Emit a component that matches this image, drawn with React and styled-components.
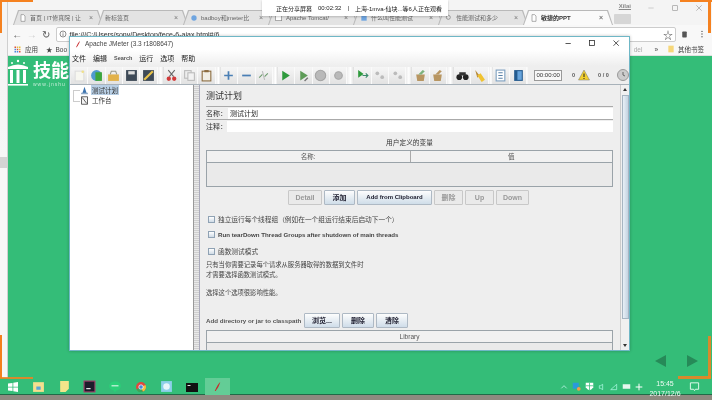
import React from "react";
import styled, { createGlobalStyle, css } from "styled-components";

const Global = createGlobalStyle`
  html, body { margin: 0; padding: 0; background: #fff; }
  * { box-sizing: border-box; }
  #root { width: 712px; height: 400px; overflow: hidden; }
`;

const FONT = `"Liberation Sans", "Noto Sans CJK SC", sans-serif`;
const ORANGE = "#f5811f";
const GREEN = "#34bd78";

const Screen = styled.div`
  position: relative;
  width: 712px;
  height: 400px;
  overflow: hidden;
  display: flex;
  flex-direction: column;
  background: #f4f4f4;
  font-family: ${FONT};
  color: #222;
  filter: blur(0.4px);
`;
const Upper = styled.div`
  flex: 1;
  min-height: 0;
  display: flex;
`;
const LeftEdge = styled.div`
  width: 8px;
  background: linear-gradient(#f4f4f4 52px, #f7f7f7 157px, #d4d4d4 157px, #d4d4d4 168px, #f7f7f7 168px);
  border-right: 1px solid #cfcfcf;
`;
const Browser = styled.div`
  flex: 1;
  min-width: 0;
  display: flex;
  flex-direction: column;
`;
const TabStrip = styled.div`
  height: 25px;
  display: flex;
  align-items: flex-end;
  padding: 0 0 0 5px;
  background: #f4f4f4;
`;
const Tab = styled.div`
  position: relative;
  isolation: isolate;
  flex-shrink: 0;
  width: 90px;
  margin-left: ${(p) => (p.$first ? 0 : -5)}px;
  height: 15px;
  display: flex;
  align-items: center;
  gap: 3px;
  padding: 0 10px 0 ${(p) => (p.$first ? 6 : 7)}px;
  font-size: 6px;
  white-space: nowrap;
  color: #666;
  background: #b9b9b9;
  clip-path: polygon(5px 0, calc(100% - 5px) 0, 100% 100%, 0 100%);
  z-index: ${(p) => (p.$active ? 2 : 1)};
  &::before {
    content: "";
    position: absolute;
    inset: 1px 1px 0 1px;
    z-index: -1;
    background: ${(p) => (p.$active ? "#fafafa" : "#e3e3e3")};
    clip-path: polygon(5px 0, calc(100% - 5px) 0, 100% 100%, 0 100%);
  }
  ${(p) => p.$active && css`color: #333; font-weight: 700;`}
`;
const TabTitle = styled.span`
  flex: 1;
`;
const TabClose = styled.span`
  font-size: 7px;
  color: #777;
`;
const NewTab = styled.div`
  flex-shrink: 0;
  width: 17px;
  height: 10px;
  margin: 0 0 1px 1px;
  background: #d6d6d6;
  border-radius: 1px;
`;
const WinControls = styled.div`
  flex: 1;
  margin-left: -16px;
  align-self: flex-start;
  display: flex;
  align-items: center;
  justify-content: flex-end;
  gap: 16px;
  height: 15px;
  padding-right: 9px;
  color: #999;
`;
const UserName = styled.span`
  font-size: 6px;
  font-weight: 700;
  color: #888;
  text-decoration: underline;
  margin-bottom: 3px;
`;
const AddressRow = styled.div`
  height: 18px;
  display: flex;
  align-items: center;
  background: #f8f8f8;
  padding: 0 2px;
  color: #555;
  font-size: 10px;
`;
const NavBtn = styled.span`
  width: 14.5px;
  text-align: center;
  color: ${(p) => (p.$off ? "#ccc" : "#555")};
`;
const Omni = styled.div`
  flex: 1;
  height: 15px;
  margin-left: 2px;
  background: #fff;
  border: 1px solid #ccc;
  border-radius: 2px;
  padding: 0 2px;
  display: flex;
  align-items: center;
  gap: 3px;
  font-size: 7px;
  color: #333;
`;
const OmniUrl = styled.span`
  flex: 1;
`;
const OmniStar = styled.span`
  font-size: 10px;
  color: #555;
`;
const ChromeBtn = styled.span`
  width: 17px;
  display: flex;
  justify-content: center;
`;
const BookmarkRow = styled.div`
  height: 13px;
  display: flex;
  align-items: center;
  background: #f8f8f8;
  padding: 0 8px 0 5px;
  font-size: 6.5px;
  color: #444;
  border-bottom: 1px solid #e0e0e0;
`;
const BmSpacer = styled.div`
  flex: 1;
`;
const BmItem = styled.span`
  margin-left: ${(p) => p.$ml || 4}px;
  color: ${(p) => p.$color || "#444"};
`;
const Page = styled.div`
  flex: 1;
  background: ${GREEN};
  padding-top: 3px;
`;
const Logo = styled.div`
  display: flex;
  align-items: flex-start;
  gap: 5px;
  color: #fff;
`;
const LogoText = styled.div`
  margin-top: 1px;
`;
const LogoName = styled.div`
  font-size: 18px;
  font-weight: 700;
  line-height: 19px;
  font-family: "Noto Sans CJK SC", sans-serif;
`;
const LogoUrl = styled.div`
  font-size: 5px;
  line-height: 6px;
  margin-top: 2px;
  letter-spacing: 1px;
  opacity: 0.7;
`;
const Taskbar = styled.div`
  position: relative;
  height: 22px;
  background: linear-gradient(${GREEN} 16px, #1f6b47 16px, #1f6b47 17px, #8e8a80 17px);
  display: flex;
  align-items: flex-start;
`;
const TaskIcons = styled.div`
  display: flex;
`;
const TaskItem = styled.div`
  width: ${(p) => p.$w || 25.5}px;
  height: 17px;
  display: flex;
  align-items: center;
  justify-content: center;
  background: ${(p) => (p.$active ? "#63cd96" : "transparent")};
`;
const Tray = styled.div`
  margin-left: auto;
  display: flex;
  align-items: center;
  height: 17px;
  gap: 4px;
  color: #e6f7ee;
  font-size: 7px;
  padding-right: 12px;
`;
const Clock = styled.div`
  width: 38px;
  text-align: center;
  font-size: 7px;
  line-height: 10px;
  margin: 4px 1px 0 -1px;
  color: #f0fbf5;
`;

const ShareBar = styled.div`
  position: absolute;
  left: 262px;
  top: 0;
  width: 186px;
  height: 16px;
  background: #fff;
  display: flex;
  align-items: center;
  gap: 6px;
  padding-left: 14px;
  font-size: 6px;
  color: #222;
  white-space: nowrap;
  box-shadow: 0 1px 2px rgba(0,0,0,.2);
  z-index: 3;
`;
const Corner = styled.div`
  position: absolute;
  background: ${ORANGE};
  ${(p) => p.$b}
`;
const Arrow = styled.div`
  position: absolute;
  top: 355px;
  left: ${(p) => p.$x}px;
  width: 0;
  height: 0;
  border-top: 6px solid transparent;
  border-bottom: 6px solid transparent;
  ${(p) => (p.$dir === "l" ? "border-right: 11px solid #268a58;" : "border-left: 11px solid #268a58;")}
`;

/* JMeter window */
const Win = styled.div`
  position: absolute;
  left: 69px;
  top: 36px;
  width: 561px;
  height: 315px;
  display: flex;
  flex-direction: column;
  background: #eee;
  border: 1px solid #6fb7c6;
  box-shadow: 0 0 3px rgba(0,0,0,.25);
  overflow: hidden;
  z-index: 2;
`;
const WinTitle = styled.div`
  height: 13px;
  background: #fff;
  display: flex;
  align-items: center;
  padding: 0 8px 0 4px;
  font-size: 6.5px;
  color: #444;
  gap: 3px;
`;
const WinTitleText = styled.span`
  flex: 1;
`;
const WinBtns = styled.div`
  display: flex;
  gap: 15px;
  align-items: center;
  color: #222;
`;
const MenuBar = styled.div`
  height: 16px;
  display: flex;
  align-items: center;
  padding-left: 2px;
  gap: 7px;
  font-size: 7px;
  color: #222;
  background: linear-gradient(#fff, #eee);
`;
const MenuSmall = styled.span`
  font-size: 5.5px;
  font-weight: 700;
  color: #555;
`;
const Toolbar = styled.div`
  height: 19px;
  display: flex;
  align-items: center;
  background: #eeeeee;
  border-bottom: 1px solid #a8b2ba;
  padding-left: 1px;
  font-size: 6px;
  color: #333;
`;
const TBtn = styled.div`
  width: 17.5px;
  height: 17px;
  display: flex;
  align-items: center;
  justify-content: center;
  background: linear-gradient(#f6f6f6, #e2e2e2);
  border-right: 1px solid #fafafa;
  & svg { width: 13px; height: 13px; }
`;
const TSep = styled.div`
  width: ${(p) => p.$w || 5}px;
  height: 17px;
  background: linear-gradient(90deg, #eee, #fff, #ddd);
`;
const Timer = styled.div`
  width: 28px;
  height: 11px;
  margin-left: 5px;
  border: 1px solid #999;
  background: #f8f8f8;
  font-size: 6px;
  line-height: 9px;
  text-align: center;
`;
const TText = styled.span`
  margin-left: ${(p) => p.$ml}px;
  font-size: 5.5px;
  font-weight: 700;
  color: #555;
  white-space: nowrap;
`;
const ToolGlyph = styled.span`
  margin-left: ${(p) => p.$ml}px;
`;
const Body = styled.div`
  flex: 1;
  min-height: 0;
  display: flex;
`;
const TreePane = styled.div`
  position: relative;
  width: 124px;
  background: #fff;
  padding-left: 5px;
  border-right: 1px solid #999;
  font-size: 6.5px;
  &::before {
    content: "";
    position: absolute;
    left: 3px;
    top: 5px;
    width: 6px;
    height: 10px;
    border: 1px solid #ccc;
    border-right: 0;
  }
`;
const TreeRow = styled.div`
  height: 10px;
  display: flex;
  align-items: center;
  gap: 2px;
  padding-left: 5px;
`;
const TreeLabel = styled.span`
  padding: 0 1px;
  color: #333;
  background: ${(p) => (p.$sel ? "#b8cfe5" : "transparent")};
`;
const Splitter = styled.div`
  width: 6px;
  background: repeating-linear-gradient(#e9e9e9 0 1px, #cfcfcf 1px 2px);
  border-right: 1px solid #aab;
`;
const RightPane = styled.div`
  flex: 1;
  min-width: 0;
  display: flex;
`;
const Form = styled.div`
  flex: 1;
  min-width: 0;
  padding: 6px 7px 0 6px;
  display: flex;
  flex-direction: column;
  font-size: 7px;
  overflow: hidden;
  & > * { flex-shrink: 0; }
`;
const Heading = styled.div`
  font-size: 9px;
  line-height: 11px;
  color: #333;
  height: 15px;
`;
const FieldRow = styled.div`
  display: flex;
  align-items: center;
  height: 13px;
  border-top: 1px solid #aaa;
`;
const FieldLabel = styled.div`
  width: ${(p) => p.$w}px;
  font-size: 7px;
  color: #333;
`;
const FieldInput = styled.div`
  flex: 1;
  height: 11px;
  background: #fff;
  font-size: 7px;
  line-height: 11px;
  padding-left: 2px;
`;
const GroupTitle = styled.div`
  text-align: center;
  font-size: 6.7px;
  line-height: 10px;
  margin: 6px 0 2px 0;
  color: #333;
`;
const Table = styled.div`
  border: 1px solid #9aa3a9;
  height: ${(p) => p.$h}px;
  margin-top: ${(p) => p.$mt || 0}px;
  background: #eaeaea;
`;
const TableHead = styled.div`
  display: grid;
  grid-template-columns: ${(p) => p.$cols};
  height: 12px;
  background: #f1f1f1;
  border-bottom: 1px solid #9aa3a9;
`;
const HeadCell = styled.div`
  text-align: center;
  font-size: 6.5px;
  line-height: 11px;
  color: #555;
  & + & { border-left: 1px solid #aaa; }
`;
const ButtonRow = styled.div`
  display: flex;
  align-items: center;
  gap: 2px;
  ${(p) => p.$pad && `padding: ${p.$pad};`}
`;
const Btn = styled.div`
  width: ${(p) => p.$w}px;
  height: 15px;
  border: 1px solid ${(p) => (p.$off ? "#c8c8c8" : "#aeb9c4")};
  background: ${(p) => (p.$off ? "#eaeaea" : "linear-gradient(#fdfdfd, #cfdde9)")};
  color: ${(p) => (p.$off ? "#999" : "#223")};
  font-size: ${(p) => p.$fs || 6}px;
  font-weight: ${(p) => (p.$off ? 700 : 700)};
  line-height: 13px;
  text-align: center;
  white-space: nowrap;
  border-radius: 1px;
`;
const CheckRow = styled.div`
  display: flex;
  align-items: center;
  gap: 3px;
  height: 10px;
  margin-top: ${(p) => p.$mt}px;
  padding-left: 2px;
  font-size: ${(p) => p.$fs || 6.7}px;
  font-weight: ${(p) => p.$weight || 400};
  color: #444;
  white-space: nowrap;
`;
const CheckBox = styled.span`
  width: 7px;
  height: 7px;
  border: 1px solid #8fa2b4;
  background: linear-gradient(#fff, #cfdbe6);
`;
const Note = styled.div`
  font-size: 6.3px;
  line-height: 10px;
  color: #444;
  margin-top: ${(p) => p.$mt}px;
`;
const ClassLabel = styled.span`
  width: 96px;
  font-size: 6.2px;
  font-weight: 700;
  color: #555;
  white-space: nowrap;
`;
const VScroll = styled.div`
  width: 9px;
  background: #f0f0f0;
  border-left: 1px solid #ccc;
  display: flex;
  flex-direction: column;
  align-items: center;
  padding-top: 3px;
`;
const ScrollThumb = styled.div`
  width: 7px;
  height: 224px;
  margin-top: 4px;
  background: linear-gradient(90deg, #e9f0f6, #c3d3e1);
  border: 1px solid #a6b5c2;
`;
const ScrollEnd = styled.div`
  margin-top: auto;
  margin-bottom: 3px;
  width: 0;
  height: 0;
  border-left: 2px solid transparent;
  border-right: 2px solid transparent;
  border-top: 3px solid #333;
`;
const ScrollTop = styled.div`
  width: 0;
  height: 0;
  border-left: 2px solid transparent;
  border-right: 2px solid transparent;
  border-bottom: 3px solid #333;
`;

const I = ({ s = 12, children, vb = "0 0 12 12" }) => (
  <svg width={s} height={s} viewBox={vb} style={{ flexShrink: 0, display: "block" }}>{children}</svg>
);

const Doc = () => (
  <I s={8}><path d="M3 1h4l2 2v8H3z" fill="#fff" stroke="#888" /></I>
);
const Feather = ({ s = 8 }) => (
  <I s={s}><path d="M9 1 C7 3 5 6 3 11 L4 11 C6 8 8 5 9 1z" fill="#c8292b" /></I>
);
const Temple = () => (
  <svg width="20" height="28" viewBox="0 0 20 28" style={{ display: "block" }}>
    <g fill="#fff">
      <circle cx="10" cy="2" r="1.2" /><circle cx="4" cy="4" r="1" /><circle cx="16" cy="4" r="1" />
      <path d="M0 8 Q10 3 20 8 V10 H0z" />
      <rect x="2" y="11" width="3" height="13" /><rect x="8.5" y="11" width="3" height="13" /><rect x="15" y="11" width="3" height="13" />
      <rect x="0" y="25" width="20" height="1.6" />
    </g>
  </svg>
);

const Plus = ({ minus }) => (
  <I><path d={minus ? "M2 6h8" : "M2 6h8M6 2v8"} stroke="#4a7fb5" strokeWidth="1.6" /></I>
);
const Play = ({ pen }) => (
  <I><path d="M3 1.5 10 6 3 10.5z" fill={pen ? "#5e9c58" : "#2e9a3c"} />{pen && <path d="M7 11l3-3" stroke="#777" strokeWidth="1.3" />}</I>
);
const Stop = ({ small }) => (
  <I><circle cx="6" cy="6" r={small ? 3.5 : 4.8} fill="#b9b9b9" stroke="#a4a4a4" /></I>
);
const Dots = () => (
  <I><circle cx="4" cy="4" r="1.7" fill="#bbb" /><circle cx="8.5" cy="7.5" r="1.7" fill="#bbb" /></I>
);
const Basket = ({ tint }) => (
  <I><path d="M2 5h8l-1 6H3z" fill="#b89662" /><path d="M4 5 8 1l2 1-3 3z" fill={tint} /></I>
);

export default function App() {
  return (
    <Screen>
      <Global />
      <Upper>
        <LeftEdge />
        <Browser>
          <TabStrip>
            <Tab $first><Doc /><TabTitle>首页 | IT修真院 | 让</TabTitle><TabClose>×</TabClose></Tab>
            <Tab><TabTitle>新标签页</TabTitle><TabClose>×</TabClose></Tab>
            <Tab><I s={8}><circle cx="6" cy="6" r="4" fill="#6fa5e0" /></I><TabTitle>badboy和jmeter比</TabTitle><TabClose>×</TabClose></Tab>
            <Tab><I s={8}><rect x="1" y="2" width="9" height="8" fill="#fff" stroke="#888" /></I><TabTitle>Apache Tomcat/</TabTitle><TabClose>×</TabClose></Tab>
            <Tab><I s={8}><rect x="2" y="2" width="8" height="8" fill="#6fa5e0" /></I><TabTitle>什么叫性能测试</TabTitle><TabClose>×</TabClose></Tab>
            <Tab><I s={8}><circle cx="5" cy="5" r="3" fill="none" stroke="#777" /></I><TabTitle>性能测试和多少</TabTitle><TabClose>×</TabClose></Tab>
            <Tab $active><Doc /><TabTitle>敏捷的PPT</TabTitle><TabClose>×</TabClose></Tab>
            <NewTab />
            <WinControls>
              <UserName>Xilai</UserName>
              <I s={8}><path d="M2 6h8" stroke="#bbb" /></I>
              <I s={8}><rect x="2.5" y="2.5" width="7" height="7" fill="none" stroke="#999" /></I>
              <I s={8}><path d="M2 2l8 8M10 2l-8 8" stroke="#999" /></I>
            </WinControls>
          </TabStrip>
          <AddressRow>
            <NavBtn>←</NavBtn>
            <NavBtn $off>→</NavBtn>
            <NavBtn>↻</NavBtn>
            <Omni>
              <I s={8}><circle cx="6" cy="6" r="4.5" fill="none" stroke="#555" /><path d="M6 5v4M6 3v1" stroke="#555" /></I>
              <OmniUrl>file:///C:/Users/sony/Desktop/fece-6-ajax.html#/6</OmniUrl>
              <OmniStar>☆</OmniStar>
            </Omni>
            <ChromeBtn><I s={9}><rect x="3" y="2" width="6" height="8" rx="1" fill="#555" /></I></ChromeBtn>
            <ChromeBtn><I s={8}><path d="M6 2v.1M6 6v.1M6 10v.1" stroke="#555" strokeWidth="2" strokeLinecap="round" /></I></ChromeBtn>
          </AddressRow>
          <BookmarkRow>
            <I s={9}>
              {[2, 5, 8].map((y) => [2, 5, 8].map((x) => (
                <rect key={`${x}-${y}`} x={x} y={y} width="2" height="2" fill={x === y ? "#d9503f" : x > y ? "#e6b93c" : "#4a87d9"} />
              )))}
            </I>
            <BmItem $ml={3}>应用</BmItem>
            <BmItem $ml={8}>★</BmItem>
            <BmItem $ml={3}>Boo</BmItem>
            <BmSpacer />
            <BmItem $color="#aaa">del</BmItem>
            <BmItem $ml={12}>»</BmItem>
            <BmItem $ml={9}><I s={8}><rect x="2" y="1" width="8" height="10" fill="#f6d77a" /></I></BmItem>
            <BmItem $ml={3}>其他书签</BmItem>
          </BookmarkRow>
          <Page>
            <Logo>
              <Temple />
              <LogoText>
                <LogoName>技能</LogoName>
                <LogoUrl>www.jnshu</LogoUrl>
              </LogoText>
            </Logo>
          </Page>
        </Browser>
      </Upper>
      <Taskbar>
        <TaskIcons>
          <TaskItem $w={26}>
            <I s={12}><path d="M1 2.5 5.5 2v3.7H1zM6.3 1.8 11 1v4.7H6.3zM1 6.5h4.5V10L1 9.5zM6.3 6.5H11V11l-4.7-.7z" fill="#fff" /></I>
          </TaskItem>
          <TaskItem><I s={13}><path d="M1 2h10v9H1z" fill="#f5df8e" /><rect x="4" y="6" width="4" height="3" fill="#5aa5d6" /></I></TaskItem>
          <TaskItem><I s={13}><path d="M2 1h8v7l-3 3H2z" fill="#f3e58a" /></I></TaskItem>
          <TaskItem><I s={13}><rect x="1" y="1" width="10" height="10" fill="#1c1c2a" stroke="#a33a6a" /><path d="M3 8h4" stroke="#fff" /></I></TaskItem>
          <TaskItem><I s={14}><path d="M1 5a5 4 0 1 1 6 4l-1 2-1-2a5 4 0 0 1-4-4z" fill="#2bcf78" /><path d="M3 5h6" stroke="#fff" strokeWidth=".8" /></I></TaskItem>
          <TaskItem>
            <I s={12}><circle cx="6" cy="6" r="5" fill="#e0483e" /><path d="M6 6 1.5 8.5A5 5 0 0 0 8 10.6z" fill="#3ba55a" /><path d="M6 6l4.5-2a5 5 0 0 1-2.5 6.6z" fill="#f5c33b" /><circle cx="6" cy="6" r="2.2" fill="#4a87d9" stroke="#fff" strokeWidth=".7" /></I>
          </TaskItem>
          <TaskItem><I s={13}><rect x="1" y="1" width="10" height="10" fill="#8ed0ea" /><circle cx="6" cy="6" r="3" fill="#e8f6fb" /></I></TaskItem>
          <TaskItem><I s={12}><rect x="0" y="2" width="12" height="9" fill="#111" /><path d="M1.5 4.5h3" stroke="#ddd" /></I></TaskItem>
          <TaskItem $active><Feather s={11} /></TaskItem>
        </TaskIcons>
        <Tray>
          <I s={8}><path d="M2 8l4-4 4 4" fill="none" stroke="#dff" /></I>
          <I s={9}><rect x="1" y="1" width="8" height="8" fill="#2a9ad9" /><circle cx="9" cy="9" r="2.5" fill="#f19a4a" /></I>
          <I s={9}><path d="M1 1h10v6q-2 3-5 4-3-1-5-4z" fill="#fff" /><path d="M6 1v10M1 5h10" stroke="#34bd78" /></I>
          <I s={8}><path d="M2 4h2l3-2v8L4 8H2z" fill="none" stroke="#bfe" /></I>
          <I s={8}><path d="M1 10 10 2v8z" fill="none" stroke="#bfe" /></I>
          <I s={9}><rect x="1" y="3" width="10" height="6" fill="#e6f7ee" /></I>
          <I s={8}><path d="M6 1v10M1 6h10" stroke="#fff" strokeWidth="1.5" /></I>
          <Clock>15:45<br />2017/12/6</Clock>
          <I s={11}><path d="M1.5 2h9v7H7L6 10.5 5 9H1.5z" fill="none" stroke="#eafff3" /></I>
        </Tray>
      </Taskbar>

      <ShareBar>
        <span>正在分享屏幕</span>
        <span>00:02:32</span>
        <span>|</span>
        <span>上海-1mva-仙块...等6人正在观看</span>
      </ShareBar>

      <Corner $b="left:0;top:0;width:33px;height:2px;" />
      <Corner $b="left:0;top:0;width:2px;height:33px;" />
      <Corner $b="left:0;top:335px;width:2px;height:43px;" />
      <Corner $b="left:0;top:377px;width:33px;height:2px;opacity:.85;" />
      <Corner $b="left:680px;top:0;width:32px;height:2px;" />
      <Corner $b="left:708px;top:0;width:3px;height:33px;" />
      <Corner $b="left:708px;top:336px;width:3px;height:42px;opacity:.85;" />
      <Corner $b="left:678px;top:376px;width:33px;height:3px;opacity:.85;" />
      <Arrow $x={655} $dir="l" />
      <Arrow $x={687} $dir="r" />

      <Win>
        <WinTitle>
          <Feather />
          <WinTitleText>Apache JMeter (3.3 r1808647)</WinTitleText>
          <WinBtns>
            <I s={9}><path d="M2 6h7" stroke="#222" /></I>
            <I s={9}><rect x="2" y="2" width="6.5" height="6.5" fill="none" stroke="#222" /></I>
            <I s={9}><path d="M2 2l7 7M9 2l-7 7" stroke="#222" /></I>
          </WinBtns>
        </WinTitle>
        <MenuBar>
          <span>文件</span><span>编辑</span><MenuSmall>Search</MenuSmall><span>运行</span><span>选项</span><span>帮助</span>
        </MenuBar>
        <Toolbar>
          <TBtn><I><rect x="2" y="2" width="8" height="9" fill="#f7f7f0" stroke="#ddd" /><circle cx="9" cy="2.5" r="1.2" fill="#f0e08a" /></I></TBtn>
          <TBtn><I><circle cx="6" cy="6" r="5" fill="#4f9ad0" /><rect x="5" y="3" width="6" height="8" fill="#3ca63c" /></I></TBtn>
          <TBtn><I><path d="M1 5h10v6H1z" fill="#e2b24a" /><path d="M3 5l1-3h4l1 3" fill="none" stroke="#998" /></I></TBtn>
          <TBtn><I><rect x="1" y="1" width="10" height="10" fill="#3e4a57" /><rect x="3" y="2" width="6" height="3" fill="#ddd" /></I></TBtn>
          <TBtn><I><rect x="1" y="1" width="10" height="10" fill="#3e4a57" /><path d="M2 10 10 2" stroke="#e8c34a" strokeWidth="2" /></I></TBtn>
          <TSep $w={6} />
          <TBtn><I><path d="M3 1l5 6M9 1 4 7" stroke="#666" /><circle cx="3.5" cy="9" r="2" fill="#d23a3a" /><circle cx="8.5" cy="9" r="2" fill="#d23a3a" /></I></TBtn>
          <TBtn><I><rect x="1.5" y="1.5" width="6" height="7" fill="#eee" stroke="#bbb" /><rect x="4.5" y="3.5" width="6" height="7" fill="#f2f2f2" stroke="#bbb" /></I></TBtn>
          <TBtn><I><rect x="2" y="2" width="8" height="9" fill="#f1efe6" stroke="#8b6b3e" /><rect x="4" y="1" width="4" height="2" fill="#8b6b3e" /></I></TBtn>
          <TSep />
          <TBtn><Plus /></TBtn>
          <TBtn><Plus minus /></TBtn>
          <TBtn><I><path d="M2 8 5 5M7 7l3-3" stroke="#6a9a6a" /><path d="M5 2l2 8" stroke="#bbb" /></I></TBtn>
          <TSep />
          <TBtn><Play /></TBtn>
          <TBtn><Play pen /></TBtn>
          <TBtn><Stop /></TBtn>
          <TBtn><Stop small /></TBtn>
          <TSep $w={7} />
          <TBtn><I><path d="M2 1l5 3.5L2 8z" fill="#2e9a3c" /><path d="M6 6h5M9 4l2 2-2 2" stroke="#3b8a6a" fill="none" /></I></TBtn>
          <TBtn><Dots /></TBtn>
          <TBtn><Dots /></TBtn>
          <TSep $w={6} />
          <TBtn><Basket tint="#7db37d" /></TBtn>
          <TBtn><Basket tint="#b89662" /></TBtn>
          <TSep $w={7} />
          <TBtn><I><circle cx="3" cy="7.5" r="2.6" fill="#222" /><circle cx="9" cy="7.5" r="2.6" fill="#222" /><rect x="3" y="3" width="6" height="3" fill="#333" /></I></TBtn>
          <TBtn><I><path d="M2 1l4 5-2 2z" fill="#b78a3b" /><path d="M4 6l3-2 4 6-3 2z" fill="#f0c22f" /></I></TBtn>
          <TSep $w={4} />
          <TBtn><I><rect x="2" y="1" width="8" height="10" fill="#fff" stroke="#7c9fc0" /><path d="M4 3.5h4M4 6h4M4 8.5h4" stroke="#5b82a8" /></I></TBtn>
          <TBtn><I><rect x="2" y="1" width="8" height="10" fill="#245b8f" /><rect x="5" y="2" width="4" height="8" fill="#67a4dc" /></I></TBtn>
          <TSep $w={2} />
          <Timer>00:00:00</Timer>
          <TText $ml={10}>0</TText>
          <ToolGlyph $ml={3}>
            <I><path d="M6 1 11.5 11H.5z" fill="#f2cf2d" stroke="#777" strokeWidth=".5" /><path d="M6 4.5v3.5M6 9v1" stroke="#222" /></I>
          </ToolGlyph>
          <TText $ml={8}>0 / 0</TText>
          <ToolGlyph $ml={8}>
            <I><circle cx="6" cy="6" r="5.5" fill="#ccc" stroke="#999" /><path d="M6 3v3l2 1" stroke="#666" fill="none" /></I>
          </ToolGlyph>
        </Toolbar>
        <Body>
          <TreePane>
            <TreeRow>
              <I s={9}><path d="M6 1 9 10H3z" fill="#3c74b0" /><rect x="1.5" y="9" width="9" height="2" fill="#8aa8c8" /></I>
              <TreeLabel $sel>测试计划</TreeLabel>
            </TreeRow>
            <TreeRow>
              <I s={9}><path d="M2 1h8v10H2z" fill="#f4f4f4" stroke="#333" /><path d="M3 2l6 8" stroke="#333" /></I>
              <TreeLabel>工作台</TreeLabel>
            </TreeRow>
          </TreePane>
          <Splitter />
          <RightPane>
            <Form>
              <Heading>测试计划</Heading>
              <FieldRow>
                <FieldLabel $w={22}>名称：</FieldLabel>
                <FieldInput>测试计划</FieldInput>
              </FieldRow>
              <FieldRow>
                <FieldLabel $w={21}>注释：</FieldLabel>
                <FieldInput />
              </FieldRow>
              <GroupTitle>用户定义的变量</GroupTitle>
              <Table $h={37}>
                <TableHead $cols="1fr 1fr">
                  <HeadCell>名称:</HeadCell>
                  <HeadCell>值</HeadCell>
                </TableHead>
              </Table>
              <ButtonRow $pad="3px 0 0 82px">
                <Btn $w={34} $off $fs={7}>Detail</Btn>
                <Btn $w={31} $fs={7}>添加</Btn>
                <Btn $w={75}>Add from Clipboard</Btn>
                <Btn $w={29} $off $fs={7}>删除</Btn>
                <Btn $w={29} $off $fs={7}>Up</Btn>
                <Btn $w={33} $off $fs={7}>Down</Btn>
              </ButtonRow>
              <CheckRow $mt={9}><CheckBox />独立运行每个线程组（例如在一个组运行结束后启动下一个）</CheckRow>
              <CheckRow $mt={5} $fs={6.15} $weight={700}><CheckBox />Run tearDown Thread Groups after shutdown of main threads</CheckRow>
              <CheckRow $mt={7}><CheckBox />函数测试模式</CheckRow>
              <Note $mt={4}>只有当你需要记录每个请求从服务器取得的数据到文件时<br />才需要选择函数测试模式。</Note>
              <Note $mt={8}>选择这个选项很影响性能。</Note>
              <ButtonRow $pad="15px 0 0 0">
                <ClassLabel>Add directory or jar to classpath</ClassLabel>
                <Btn $w={36} $fs={7}>浏览...</Btn>
                <Btn $w={32} $fs={7}>删除</Btn>
                <Btn $w={32} $fs={7}>清除</Btn>
              </ButtonRow>
              <Table $h={30} $mt={2}>
                <TableHead $cols="1fr">
                  <HeadCell>Library</HeadCell>
                </TableHead>
              </Table>
            </Form>
            <VScroll>
              <ScrollTop />
              <ScrollThumb />
              <ScrollEnd />
            </VScroll>
          </RightPane>
        </Body>
      </Win>
    </Screen>
  );
}
